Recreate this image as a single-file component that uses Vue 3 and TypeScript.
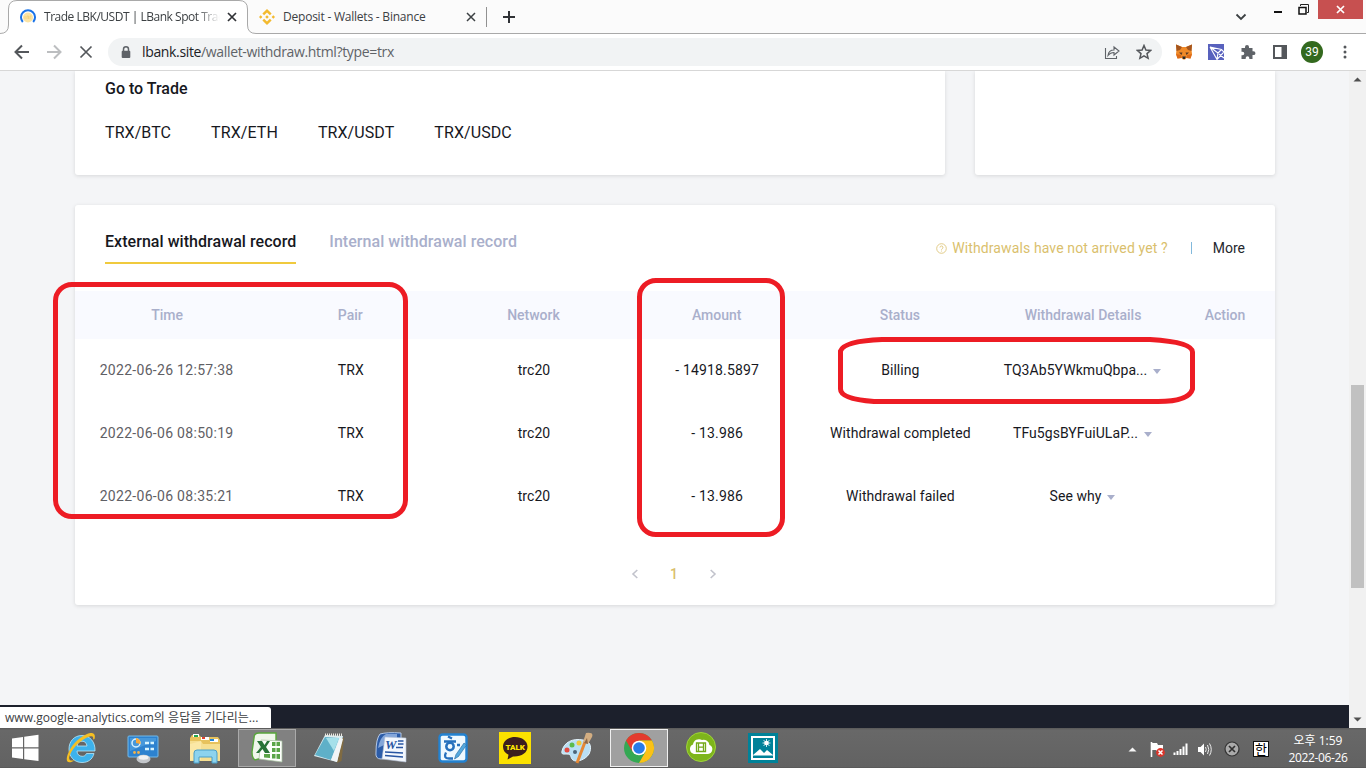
<script setup lang="ts">
interface RecordRow {
  time: string
  pair: string
  network: string
  amount: string
  status: string
  details: string
}

const pairs: string[] = ['TRX/BTC', 'TRX/ETH', 'TRX/USDT', 'TRX/USDC']
const columns: string[] = ['Time', 'Pair', 'Network', 'Amount', 'Status', 'Withdrawal Details', 'Action']
const rows: RecordRow[] = [
  { time: '2022-06-26 12:57:38', pair: 'TRX', network: 'trc20', amount: '- 14918.5897', status: 'Billing', details: 'TQ3Ab5YWkmuQbpa...' },
  { time: '2022-06-06 08:50:19', pair: 'TRX', network: 'trc20', amount: '- 13.986', status: 'Withdrawal completed', details: 'TFu5gsBYFuiULaP...' },
  { time: '2022-06-06 08:35:21', pair: 'TRX', network: 'trc20', amount: '- 13.986', status: 'Withdrawal failed', details: 'See why' },
]
</script>

<template>
  <div class="screen">
    <header class="tabs">
      <svg class="tab-shape" width="1366" height="34" viewBox="0 0 1366 34">
        <path d="M0 33.5Q8.500 33.500 8.500 25V9Q8.500 .5 17 .5H239Q247.500 .5 247.500 9V25Q247.500 33.500 256 33.500H1366V35H0Z" fill="#fff" />
        <path d="M0 33.5Q8.500 33.500 8.500 25V9Q8.500 .5 17 .5H239Q247.500 .5 247.500 9V25Q247.500 33.500 256 33.500H1366" fill="none" stroke="#a9a9a9" />
      </svg>
      <div class="tab first">
        <svg width="16" height="16" viewBox="0 0 16 16">
          <circle cx="8" cy="8.500" r="5" fill="#fbe3a4" />
          <path d="M5 10V7M7 10V7h1.500v3M10 10V7h1.500" stroke="#f3cf78" stroke-width=".8" fill="none" />
          <path d="M2.800 13A7 7 0 1 1 13.200 13" fill="none" stroke="#1a73e8" stroke-width="2" />
        </svg>
        <span class="tab-title t1">Trade LBK/USDT | LBank Spot Trad</span>
        <svg class="close" width="10" height="10" viewBox="0 0 10 10"><path d="M1 1L9 9M9 1L1 9" stroke="#303236" stroke-width="1.700" /></svg>
      </div>
      <div class="tab second">
        <svg width="16" height="16" viewBox="0 0 16 16" fill="#f3ba2f">
          <path d="M8 0L12.600 4.600 10.900 6.300 8 3.400 5.100 6.300 3.400 4.600ZM8 16L3.400 11.400 5.100 9.700 8 12.600 10.900 9.700 12.600 11.400ZM1.700 6.300L3.400 8 1.700 9.700 0 8ZM14.300 6.300L16 8 14.300 9.700 12.600 8ZM8 6.200L9.800 8 8 9.800 6.200 8Z" />
        </svg>
        <span class="tab-title t2">Deposit - Wallets - Binance</span>
        <svg class="close" width="10" height="10" viewBox="0 0 10 10"><path d="M1 1L9 9M9 1L1 9" stroke="#3c4043" stroke-width="1.500" /></svg>
      </div>
      <i class="tab-sep"></i>
      <svg class="plus" width="14" height="14" viewBox="0 0 14 14"><path d="M7 1V13M1 7H13" stroke="#303236" stroke-width="2" /></svg>
      <div class="window-buttons">
        <svg width="12" height="10" viewBox="0 0 12 10"><path d="M1.500 2.500L6 7 10.500 2.500" fill="none" stroke="#3c4043" stroke-width="1.800" /></svg>
        <svg width="10" height="10" viewBox="0 0 10 10"><path d="M1 9H9" stroke="#111" stroke-width="2" /></svg>
        <svg width="11" height="11" viewBox="0 0 11 11"><path d="M2.500 2V.5H10.500V8.500H9" fill="none" stroke="#222" /><path d="M1 3.500H8V10H1Z" fill="none" stroke="#111" stroke-width="1.500" /></svg>
        <span class="win-close"><svg width="9" height="9" viewBox="0 0 9 9"><path d="M1 1L8 8M8 1L1 8" stroke="#fff" stroke-width="1.700" /></svg></span>
      </div>
    </header>

    <div class="toolbar">
      <svg class="nav back" width="16" height="16" viewBox="0 0 16 16"><path d="M15 8H2.500M8 1.500L1.500 8 8 14.500" fill="none" stroke="#54575b" stroke-width="2" /></svg>
      <svg class="nav fwd" width="16" height="16" viewBox="0 0 16 16"><path d="M1 8H13.500M8 1.500L14.500 8 8 14.500" fill="none" stroke="#bcbec0" stroke-width="2" /></svg>
      <svg class="nav stop" width="14" height="14" viewBox="0 0 14 14"><path d="M1.500 1.500L12.500 12.500M12.500 1.500L1.500 12.500" stroke="#54575b" stroke-width="1.700" /></svg>
      <div class="address">
        <svg class="lock" width="10" height="13" viewBox="0 0 10 13"><path d="M2.500 6V3.300a2.500 2.500 0 0 1 5 0V6" fill="none" stroke="#5f6368" stroke-width="1.500" /><rect x=".7" y="4.800" width="8.600" height="7.200" rx="1" fill="#5f6368" /></svg>
        <span class="url"><b>lbank.site</b>/wallet-withdraw.html?type=trx</span>
        <svg class="share" width="16" height="16" viewBox="0 0 16 16"><path d="M1.500 4V14.500H12.500V12M4 11.500C4.500 7.500 7 6 10 6V3L15 7 10 11V8.500C7.500 8.500 5.500 9.500 4 11.500Z" fill="none" stroke="#5f6368" stroke-width="1.100" /></svg>
        <svg class="star" width="16" height="16" viewBox="0 0 16 16"><path d="M8 1.500L9.900 6 14.700 6.400 11 9.600 12.100 14.300 8 11.800 3.900 14.300 5 9.600 1.300 6.400 6.100 6Z" fill="none" stroke="#54575b" stroke-width="1.500" /></svg>
      </div>
      <div class="extensions">
        <svg width="18" height="16" viewBox="0 0 18 16">
          <path d="M1 .5L7 3H11L17 .5 16.500 6 17 10 15.500 14.500 11.500 14 10 15.500H8L6.500 14 2.500 14.500 1 10 1.500 6Z" fill="#f08a28" />
          <path d="M1 .5L7 3 5 6 1.500 7ZM17 .5L11 3 13 6 16.500 7Z" fill="#a5551d" />
          <path d="M4 8.500L7.500 8.500 6.500 11ZM14 8.500L10.500 8.500 11.500 11Z" fill="#5a3a24" />
          <path d="M7.200 12.500H10.800L10 15H8Z" fill="#252a30" /><path d="M1 10L6 11 6.500 14 2.500 14.500ZM17 10L12 11 11.500 14 15.500 14.500Z" fill="#dd6b18" />
        </svg>
        <svg width="16" height="16" viewBox="0 0 16 16"><rect width="16" height="16" fill="#5861bd" /><path d="M2 3L13.500 5.500 16 8M2 3L9 15.500 16 8M2 3L10 9 9 15M10 9L13.500 5.500M11 10L16 14" fill="none" stroke="#fff" stroke-width="1.100" /></svg>
        <svg width="16" height="16" viewBox="0 0 16 16"><path d="M1.500 4H5V3a2 2 0 0 1 4 0V4H12.500V7.200H13.500a1.900 1.900 0 0 1 0 3.900H12.500V15H9.300V14a1.800 1.800 0 0 0-3.600 0v1H1.500V11.300H2.500a1.800 1.800 0 0 0 0-3.600H1.500Z" fill="#5f6368" /></svg>
        <svg width="16" height="16" viewBox="0 0 16 16"><rect x="2" y="2" width="12" height="12" fill="#fff" stroke="#54575b" stroke-width="2" /><path d="M9.500 1H15V15H9.500Z" fill="#54575b" /></svg>
        <span class="avatar">39</span>
        <svg class="dots" width="4" height="14" viewBox="0 0 4 14" fill="#54575b"><circle cx="2" cy="2" r="1.500" /><circle cx="2" cy="7" r="1.500" /><circle cx="2" cy="12" r="1.500" /></svg>
      </div>
    </div>

    <div class="viewport">
      <main class="page">
        <div class="top-row">
          <section class="card trade">
            <h2>Go to Trade</h2>
            <nav><a v-for="pair in pairs" :key="pair">{{ pair }}</a></nav>
          </section>
          <section class="card side"></section>
        </div>

        <section class="card record">
          <div class="record-head">
            <h3 class="active">External withdrawal record</h3>
            <h3 class="inactive">Internal withdrawal record</h3>
            <div class="head-links">
              <svg width="11" height="11" viewBox="0 0 11 11"><circle cx="5.500" cy="5.500" r="4.800" fill="none" stroke="#dfc67d" stroke-width=".9" /><path d="M4 4.500a1.500 1.500 0 1 1 2.200 1.300Q5.500 6.100 5.500 6.800M5.500 7.600V8.500" fill="none" stroke="#dfc67d" stroke-width=".9" /></svg>
              <span class="help">Withdrawals have not arrived yet ?</span>
              <i></i>
              <span class="more">More</span>
            </div>
          </div>
          <div class="grid header"><span v-for="column in columns" :key="column">{{ column }}</span></div>
          <div v-for="row in rows" :key="row.time" class="grid row">
            <span class="time">{{ row.time }}</span>
            <span>{{ row.pair }}</span>
            <span>{{ row.network }}</span>
            <span class="amount">{{ row.amount }}</span>
            <span>{{ row.status }}</span>
            <span class="details">{{ row.details }}<i class="caret"></i></span>
            <span></span>
          </div>
          <div class="pager">
            <svg width="8" height="10" viewBox="0 0 8 10"><path d="M6.300 1L2 5 6.300 9" fill="none" stroke="#c2c3cc" stroke-width="1.600" /></svg>
            <b>1</b>
            <svg width="8" height="10" viewBox="0 0 8 10"><path d="M1.700 1L6 5 1.700 9" fill="none" stroke="#c2c3cc" stroke-width="1.600" /></svg>
          </div>
        </section>
        <footer></footer>
        <div class="load-status">www.google-analytics.com의 응답을 기다리는...</div>
      </main>
      <div class="scrollbar">
        <svg width="17" height="17" viewBox="0 0 17 17"><path d="M4.500 10.500L8.500 6.500 12.500 10.500Z" fill="#505050" /></svg>
        <i></i>
        <svg class="down" width="17" height="17" viewBox="0 0 17 17"><path d="M4.500 6.500L8.500 10.500 12.500 6.500Z" fill="#505050" /></svg>
      </div>
    </div>

    <div class="taskbar">
      <div class="slot start">
        <svg width="28" height="28" viewBox="0 0 28 28" fill="#fff"><path d="M1 4.500L12 3V13.300H1ZM13.200 2.800L27.500 .8V13.300H13.200ZM1 14.500H12V25L1 23.500ZM13.200 14.500H27.500V27L13.200 25.200Z" /></svg>
      </div>
      <div class="slot">
        <svg width="32" height="32" viewBox="0 0 32 32">
          <path d="M17 3.500C9 3.500 4 9.500 4 17S9 30.500 17 30.500c6 0 10.500-3 12-9H21.500c-1 2-2.300 2.800-4.300 2.800-3 0-5.200-2-5.200-5.300H30C30.500 10 25 3.500 17 3.500ZM12 14c.5-3 2-4.800 5-4.800S21.500 11 22 14Z" fill="#3db2ec" stroke="#b8e8fb" stroke-width=".8" />
          <path d="M10 28C4 32 0 31 2.500 23 5.500 14 13 6 21 2.500c7-3 10-1 8.500 4.500l-1.500.5c1-4-2-4.200-7-1.500C13 10 6.500 18 4.500 24c-1.300 4.200 1 5.500 5.500 4Z" fill="#f5bf23" />
        </svg>
      </div>
      <div class="slot">
        <svg width="32" height="32" viewBox="0 0 32 32">
          <rect x="1" y="4" width="30" height="21" rx="1" fill="#2d82cf" stroke="#74bae9" />
          <path d="M3 6H29V9L3 19Z" fill="#56a6e2" opacity=".6" />
          <circle cx="9" cy="11" r="4" fill="none" stroke="#d7f1ff" stroke-width="1.500" /><path d="M9 11V6A5 5 0 0 1 13.500 12Z" fill="#f7a83b" />
          <path d="M18 11H22M23.500 11H27M18 17H22M23.500 17H27" stroke="#d7f5ff" stroke-width="2.500" /><circle cx="7.500" cy="20.500" r="1.400" fill="#f2b24b" /><circle cx="11.500" cy="20.500" r="1.400" fill="#f2b24b" />
          <ellipse cx="16.500" cy="27" rx="7" ry="4.200" fill="#c3c6ca" /><ellipse cx="16.500" cy="25.500" rx="5" ry="2.200" fill="#f0f1f2" />
        </svg>
      </div>
      <div class="slot">
        <svg width="32" height="32" viewBox="0 0 32 32">
          <path d="M1 6L3 3H10L12 5H29L31 8V27H1Z" fill="#e7c25c" /><path d="M4 2H10V5H4Z" fill="#fff" /><path d="M12 5H20V8H12ZM21 7H29V10H21Z" fill="#fff" />
          <rect x="5" y="3" width="4" height="2" fill="#22a74e" /><rect x="13" y="5" width="3" height="2" fill="#e2422e" /><rect x="21" y="7" width="4" height="2" fill="#2486d8" />
          <path d="M1 9H12L14 12H31V29H1Z" fill="#f6df91" /><path d="M1 12L12 9V28H1Z" fill="#fff2bb" opacity=".5" />
          <path d="M5 31V21Q5 18 8 18H25Q28 18 28 21V31H23V25H10V31Z" fill="#8dd3ee" stroke="#4a9fc8" />
        </svg>
      </div>
      <div class="slot excel">
        <svg width="32" height="32" viewBox="0 0 32 32">
          <path d="M3 6Q3 1 8 1H25V22L4 28Q1 26 1 20Z" fill="#f0f7eb" stroke="#58a63b" stroke-width="1.400" />
          <path d="M10 8L31 9V30L8 27Z" fill="#fcfffb" stroke="#a5bf9d" stroke-width=".7" />
          <path d="M21 10H24.500V14H21ZM25.500 10H29V14H25.500ZM21 16H24.500V20H21ZM25.500 16H29V20H25.500ZM13 22H19V26L13 25.500ZM21 22H24.500V26.500H21ZM25.500 22H29V27L25.500 26.700Z" fill="#5aa547" />
          <path d="M6 9H11L13.500 13 16 9H19L15 15 19 21H14L11.500 17 8 21H5L10 15Z" fill="#287437" />
        </svg>
      </div>
      <div class="slot">
        <svg width="32" height="32" viewBox="0 0 32 32">
          <path d="M31 6L28.500 29 24 31 27 6Z" fill="#806b42" /><path d="M12 3L30 4 24 30 1 24Z" fill="#d9edf2" />
          <path d="M12 5L26 6 18 28 2 23Z" fill="#5fb0c8" /><path d="M13 6L26 6 21 19Z" fill="#a5e0ea" /><path d="M12 3H30" stroke="#ebe9e2" stroke-width="3" stroke-dasharray="1 1" /><path d="M27 6L30 7 24 30 18 28Z" fill="#f2f5f6" />
        </svg>
      </div>
      <div class="slot">
        <svg width="32" height="32" viewBox="0 0 32 32">
          <path d="M5 2Q12 0 26 1V24L6 27Q0 27 1 20 1 7 5 2Z" fill="#2c5ca8" stroke="#b4c9e8" /><path d="M3 16Q5 5 11 2H22V7L7 14Z" fill="#a9c6ee" opacity=".7" />
          <path d="M10 5L31 6V30L7 27Z" fill="#f3f7fd" stroke="#b3bfd4" stroke-width=".6" />
          <path d="M23 9H28.500M23 12H28.500M21 15.500H28M10 20L28 21M10 23.500L28 25" stroke="#2855a2" stroke-width="1.600" />
          <text x="10" y="17" font-family="Liberation Serif" font-size="13" font-weight="bold" font-style="italic" fill="#2855a2">W</text>
        </svg>
      </div>
      <div class="slot">
        <svg width="32" height="32" viewBox="0 0 32 32">
          <rect x="2.500" y="2.500" width="27" height="27" rx="3" fill="#eff9ff" stroke="#2382d1" stroke-width="2.400" />
          <path d="M11 4.500L15 6.500M7 9.500H19M20 13H23" stroke="#2670bd" stroke-width="2.300" /><circle cx="13" cy="14.500" r="3.700" fill="none" stroke="#2670bd" stroke-width="2.500" /><path d="M9 20.500Q6 26.500 12 26.500H16" fill="none" stroke="#2670bd" stroke-width="2.300" /><path d="M27 11L19 22.500 17.500 27 21.500 24.500 29.500 13Z" fill="#55a9df" stroke="#24669a" stroke-width=".6" />
        </svg>
      </div>
      <div class="slot">
        <svg width="32" height="32" viewBox="0 0 32 32"><rect width="32" height="32" fill="#fbe100" /><path d="M16 5C9 5 4 9.200 4 14.800c0 3.500 2 6.300 5.500 7.900L8.500 27.500 14 24.500C22 25 28.500 21 28.500 14.800 28.500 9 23 5 16 5Z" fill="#3b1e1e" /><text x="16.200" y="17.900" text-anchor="middle" font-family="Roboto" font-size="8" font-weight="900" fill="#ffe900">TALK</text></svg>
      </div>
      <div class="slot">
        <svg width="32" height="32" viewBox="0 0 32 32">
          <path d="M1 19C3 10 12 6 22 8c8 1 9 8 6 14-3 5-12 9-16 6-3-2-1-6-6-6-3 0-6 1-5-3Z" fill="#b9dff4" stroke="#e5f4fc" />
          <circle cx="6" cy="18" r="2.500" fill="#e34b42" /><circle cx="11" cy="13" r="2.500" fill="#5bbb4b" /><circle cx="18" cy="11" r="2.500" fill="#efc93c" /><circle cx="14" cy="20" r="2" fill="#4b6579" />
          <path d="M24 10L16 31" stroke="#e58835" stroke-width="3" /><path d="M25 1Q33 0 31 5L27 12 22 10Z" fill="#d3ae82" /><path d="M26 6L23 11 27 12Z" fill="#8e6746" />
        </svg>
      </div>
      <div class="slot chrome">
        <svg width="32" height="32" viewBox="0 0 32 32">
          <circle cx="16" cy="16" r="15" fill="#34a853" /><path d="M3 8.500A15 15 0 0 1 29 8.500H16L9.500 19.800Z" fill="#e33b2e" /><path d="M29 8.500A15 15 0 0 1 16 31L22.500 19.800 16 8.500Z" fill="#fbc116" /><circle cx="16" cy="16" r="7.300" fill="#fff" /><circle cx="16" cy="16" r="5.800" fill="#287be8" />
        </svg>
      </div>
      <div class="slot">
        <svg width="32" height="32" viewBox="0 0 32 32"><circle cx="16" cy="15" r="14.500" fill="#7eb51b" stroke="#9ed33a" /><path d="M9 22a5 5 0 0 1-1-9.500A6 6 0 0 1 17 8a6 6 0 0 1 7.500 5A4.700 4.700 0 0 1 23 22Z" fill="#fff" /><path d="M11.500 11H20.500V19.500H11.500ZM13.500 11V19.500M18.500 11V19.500M13.500 15.200H18.500" fill="none" stroke="#74a91a" stroke-width="1.300" /></svg>
      </div>
      <div class="slot">
        <svg width="32" height="32" viewBox="0 0 32 32"><rect x="1" y="1" width="30" height="30" fill="#008299" /><path d="M4 4H28V28H4Z" fill="#fff" /><path d="M6 6H26V26H6Z" fill="#008299" /><path d="M6 23L13 17 17 21 20 18 26 23V23.500H6Z" fill="#fff" /><circle cx="19.500" cy="11" r="2.300" fill="#fff" /><path d="M19.500 7V15M15.500 11H23.500M16.500 8L22.500 14M22.500 8L16.500 14" stroke="#fff" stroke-width=".8" /></svg>
      </div>

      <div class="tray">
        <svg width="9" height="5" viewBox="0 0 9 5"><path d="M.5 4.500L4.500 .5 8.500 4.500Z" fill="#f5f5f5" /></svg>
        <svg width="17" height="17" viewBox="0 0 17 17"><path d="M2.500 1V16" stroke="#fff" stroke-width="1.600" /><path d="M3 2H8L9 4H14V10H8L7 9H3Z" fill="#fff" /><circle cx="11.500" cy="11.500" r="4.400" fill="#dc352b" /><path d="M9.500 9.500L13.500 13.500M13.500 9.500L9.500 13.500" stroke="#fff" stroke-width="1.500" /></svg>
        <svg width="16" height="14" viewBox="0 0 16 14"><path d="M1.500 13V10.500M4.500 13V9M7.500 13V7M10.500 13V4.500M13.500 13V1.500" stroke="#fff" stroke-width="2" /></svg>
        <svg width="15" height="15" viewBox="0 0 15 15"><path d="M1 5H3.500L7 1.500V13.500L3.500 10H1Z" fill="#fff" /><path d="M8.500 5Q10 7.500 8.500 10M10.500 3Q13 7.500 10.500 12M12.500 1.500Q16 7.500 12.500 13.500" fill="none" stroke="#eee" /></svg>
        <svg width="16" height="16" viewBox="0 0 16 16"><circle cx="8" cy="8" r="7" fill="#aaa" stroke="#333" stroke-width="1.200" /><path d="M5 5L11 11M11 5L5 11" stroke="#303030" stroke-width="1.700" /></svg>
        <span class="ime">한</span>
      </div>
      <div class="clock"><span>오후 1:59</span><span class="date">2022-06-26</span></div>
    </div>

    <svg class="markers" width="1366" height="768" viewBox="0 0 1366 768" fill="none" stroke="#ed1c24" stroke-width="5">
      <rect x="55.500" y="284.500" width="350" height="232" rx="16.500" />
      <rect x="639.500" y="280.500" width="143" height="254" rx="16.500" />
      <path d="M882 339.500H1150Q1192.500 342 1192.500 352V389Q1189 401.500 1158 401.500H874Q840.500 399 840.500 389V351Q844 341 882 339.500Z" />
    </svg>
  </div>
</template>

<style>
html, body { margin: 0; overflow: hidden; }
</style>

<style scoped>
* { box-sizing: border-box; }
svg { display: block; flex: none; }
.screen { position: relative; width: 1366px; height: 768px; display: flex; flex-direction: column; overflow: hidden; font-family: Roboto, "Noto Sans CJK KR", sans-serif; background: #fff; }

.tabs { position: relative; height: 34px; display: flex; background: #fbfbfb; flex: none; }
.tab-shape { position: absolute; left: 0; top: 0; }
.tab { position: relative; display: flex; align-items: center; height: 33px; }
.first { width: 248px; padding-left: 20px; }
.second { width: 238px; padding-left: 11px; }
.tab-title { font: 12px/16px "Open Sans", "Noto Sans", sans-serif; color: #3c4043; white-space: nowrap; }
.t1 { width: 176px; margin-left: 8px; letter-spacing: -.48px; -webkit-mask-image: linear-gradient(90deg, #000 152px, transparent 176px); mask-image: linear-gradient(90deg, #000 152px, transparent 176px); }
.t2 { margin-left: 8px; width: 175px; letter-spacing: -.22px; }
.first .close { margin-left: 7px; }
.second .close { margin-left: 8px; }
.tab-sep { position: relative; width: 1px; height: 20px; margin-top: 7px; background: #919191; }
.plus { position: relative; margin: 10px 0 0 15px; }
.window-buttons { position: relative; margin-left: auto; display: flex; align-items: flex-start; }
.window-buttons > svg:nth-child(1) { margin: 12px 26px 0 0; }
.window-buttons > svg:nth-child(2) { margin: 3px 15px 0 0; }
.window-buttons > svg:nth-child(3) { margin: 4px 9px 0 0; }
.win-close { width: 45px; height: 19px; margin-right: 3px; background: #c75050; display: flex; align-items: center; justify-content: center; }

.toolbar { height: 37px; flex: none; display: flex; align-items: center; padding-left: 14px; border-bottom: 1px solid #d7d7d7; background: #fff; }
.fwd { margin-left: 16px; }
.stop { margin-left: 17px; }
.address { width: 1054px; height: 28px; margin-left: 15px; padding-left: 13px; border-radius: 14px; background: #f1f3f4; display: flex; align-items: center; }
.url { margin-left: 11px; font: 14px/20px "Open Sans", "Noto Sans", sans-serif; letter-spacing: -.35px; color: #5f6368; white-space: nowrap; }
.url b { font-weight: 400; color: #202124; }
.share { margin-left: auto; }
.star { margin: 0 10px 0 16px; }
.extensions { display: flex; align-items: center; margin-left: 13px; }
.extensions > svg:nth-child(2) { margin-left: 15px; }
.extensions > svg:nth-child(3) { margin-left: 16px; }
.extensions > svg:nth-child(4) { margin-left: 16px; }
.avatar { width: 22px; height: 22px; margin-left: 13px; border-radius: 50%; background: #33691e; color: #fff; font: 12px/22px Roboto, sans-serif; text-align: center; }
.extensions > .dots { margin-left: 20px; }

.viewport { height: 657px; flex: none; display: flex; }
.page { position: relative; width: 1349px; height: 657px; display: flex; flex-direction: column; background: #f4f5f7; overflow: hidden; }
.card { background: #fff; border-radius: 3px; box-shadow: 0 1px 4px rgba(0, 0, 0, .12); }
.top-row { display: flex; gap: 30px; margin-left: 75px; height: 104px; flex: none; }
.trade { width: 870px; padding-left: 30px; border-radius: 0 0 3px 3px; }
.side { width: 300px; border-radius: 0 0 3px 3px; }
h2 { margin: 8px 0 0; font-size: 16px; line-height: 20px; font-weight: 500; color: #17181e; }
nav { display: flex; gap: 40px; margin-top: 24px; font-size: 16px; line-height: 20px; letter-spacing: .08px; color: #17181e; }
.record { width: 1200px; height: 400px; margin: 30px 0 0 75px; flex: none; }
.record-head { height: 86px; padding: 0 30px; display: flex; align-items: flex-start; }
h3 { margin: 0; font-size: 16px; line-height: 20px; font-weight: 500; letter-spacing: .05px; white-space: nowrap; }
.active { margin-top: 27px; height: 32px; color: #17181e; border-bottom: 2px solid #f0ca3e; }
.inactive { margin: 27px 0 0 33px; color: #a9afcb; }
.head-links { margin: 34px 0 0 auto; display: flex; align-items: center; font-size: 14px; line-height: 18px; }
.help { margin-left: 5px; letter-spacing: .12px; color: #dabf6d; }
.head-links i { width: 1px; height: 12px; margin: 0 21px 0 23px; background: #82b9dc; }
.more { color: #25272d; }
.grid { display: grid; grid-template-columns: repeat(6, 183.200px) 1fr; align-items: center; font-size: 14px; line-height: 20px; text-align: center; white-space: nowrap; }
.header { height: 48px; background: #f9faff; color: #a9afcb; font-weight: 500; }
.header span { padding-left: 1px; }
.row { height: 63px; padding-bottom: 2px; letter-spacing: .06px; color: #17181e; }
.row > span:not(.time):not(.details) { padding-left: 2px; }
.time { letter-spacing: .3px; color: #5f6065; }
.amount { letter-spacing: .15px; }
.details { display: flex; align-items: center; justify-content: center; }
.caret { border: 4px solid transparent; border-top: 5px solid #a9afcb; border-bottom: 0; margin: 3px 0 0 6px; }
.pager { display: flex; align-items: center; justify-content: center; gap: 31px; margin-top: 35px; padding-right: 2px; height: 21px; font-size: 14px; color: #dabf6d; }
.pager b { width: 8px; text-align: center; font-weight: 500; }
footer { height: 23px; margin-top: auto; background: #1c202c; flex: none; }
.load-status { position: absolute; left: 0; bottom: 0; width: 271px; height: 21px; padding-left: 5px; background: #fff; border-radius: 0 3px 0 0; font: 12px/21px "Open Sans", "Noto Sans CJK KR", sans-serif; letter-spacing: .04px; color: #3c4043; white-space: nowrap; }
.scrollbar { width: 17px; height: 657px; background: #f1f1f1; display: flex; flex-direction: column; align-items: center; }
.scrollbar i { width: 13px; height: 203px; margin-top: 297px; background: #c1c1c1; }
.down { margin-top: auto; }

.taskbar { height: 40px; flex: none; display: flex; align-items: center; background: linear-gradient(#595959, #686868 2px, #626262 39px, #515151); }
.slot { width: 62px; height: 40px; display: flex; align-items: center; justify-content: center; }
.slot.start { width: 50px; }
.slot.excel, .slot.chrome { width: 58px; height: 38px; margin: 0 2px; background: #818181; border: 1px solid #aaa; }
.slot.chrome { background: #a0a0a0; border-color: #f0f0f0; }
.tray { margin-left: auto; display: flex; align-items: center; margin-right: 17px; padding-top: 2px; height: 40px; }
.tray > svg:nth-child(2) { margin-left: 12px; }
.tray > svg:nth-child(3) { margin-left: 7px; }
.tray > svg:nth-child(4) { margin-left: 8px; }
.tray > svg:nth-child(5) { margin-left: 12px; }
.ime { width: 16px; height: 16px; margin-left: 13px; background: #fff; border: 1px solid #111; color: #000; font: 13px/13px "Noto Sans CJK KR", sans-serif; text-align: center; }
.clock { width: 64px; margin-right: 16px; padding-top: 1px; display: flex; flex-direction: column; align-items: center; font: 12px/17px "Open Sans", "Noto Sans CJK KR", sans-serif; color: #fff; white-space: nowrap; }
.date { letter-spacing: -.35px; }
.markers { position: absolute; left: 0; top: 0; pointer-events: none; }
</style>
